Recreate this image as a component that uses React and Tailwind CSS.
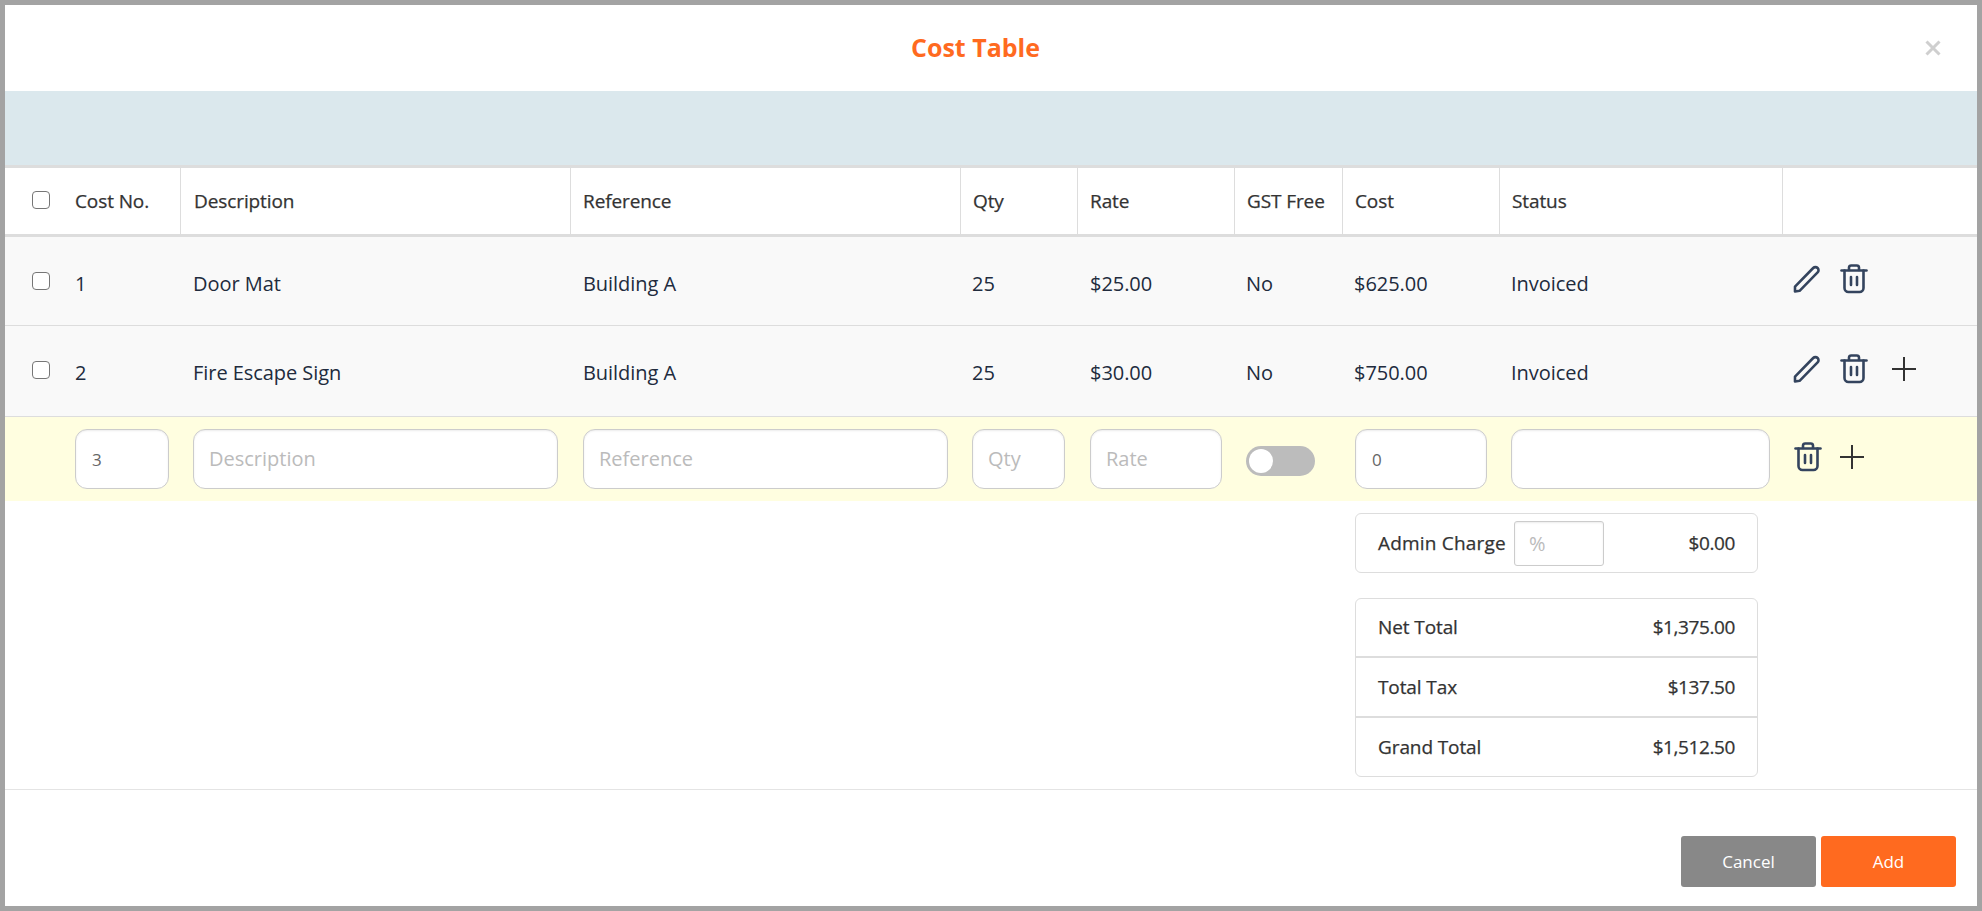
import React from "react";

const GRID = "grid grid-cols-[58px_118px_389px_390px_117px_157px_108px_157px_283px_195px]";
const FONT = "font-['Open_Sans',sans-serif]";

const ROWS = [
  { no: "1", description: "Door Mat", reference: "Building A", qty: "25", rate: "$25.00", gst: "No", cost: "$625.00", status: "Invoiced" },
  { no: "2", description: "Fire Escape Sign", reference: "Building A", qty: "25", rate: "$30.00", gst: "No", cost: "$750.00", status: "Invoiced", last: true },
];

const HEADS = ["Cost No.", "Description", "Reference", "Qty", "Rate", "GST Free", "Cost", "Status", ""];

function Pencil() {
  return (
    <svg width="28" height="28" viewBox="0 0 28 28" fill="none" stroke="#34445e" strokeWidth="2.6" strokeLinejoin="round" strokeLinecap="round">
      <path d="M2 26.5v-4.8L20.2 3a3.1 3.1 0 0 1 4.4 0a3.1 3.1 0 0 1 0 4.4L6.6 25.8L2 26.5Z" />
    </svg>
  );
}

function Trash() {
  return (
    <svg width="28" height="30" viewBox="0 0 28 30" fill="none" stroke="#34445e" strokeWidth="2.6" strokeLinejoin="round" strokeLinecap="round">
      <path d="M1.5 6.5h25" />
      <path d="M9 6V3.5A2.2 2.2 0 0 1 11.2 1.5h5.6A2.2 2.2 0 0 1 19 3.5V6" />
      <path d="M4.5 6.5V24a4 4 0 0 0 4 4h11a4 4 0 0 0 4-4V6.5" />
      <path d="M11 13v8M17 13v8" />
    </svg>
  );
}

function Plus() {
  return (
    <svg width="24" height="24" viewBox="0 0 24 24" fill="none" stroke="#333" strokeWidth="2">
      <path d="M12 0v24M0 12h24" />
    </svg>
  );
}

function Check() {
  return (
    <input
      type="checkbox"
      readOnly
      className="appearance-none block w-[18px] h-[18px] rounded-[4px] border-[1.5px] border-[#767676] bg-white"
    />
  );
}

function Field({ placeholder, value, small }) {
  return (
    <input
      readOnly
      placeholder={placeholder}
      value={value}
      className={`h-[60px] w-full rounded-[12px] border border-[#ccc] bg-white outline-none placeholder:text-[#bbb] shadow-[inset_0_1px_2px_rgba(0,0,0,0.08)] ${
        small ? "px-4 text-[17px] text-[#666]" : "px-[15px] pb-[2px] text-[20px]"
      }`}
    />
  );
}

function TotalRow({ label, value, className }) {
  return (
    <div className={`flex items-center justify-between px-[22px] text-[19px] font-medium tracking-[-0.1px] [-webkit-text-stroke:0.25px] text-[#333] ${className}`}>
      <span>{label}</span>
      <span className="tracking-[-0.4px]">{value}</span>
    </div>
  );
}

export default function App() {
  return (
    <div className={`h-screen bg-[#a3a3a3] p-[5px] ${FONT}`}>
      <div className="h-full bg-white flex flex-col">
        <div className="h-[86px] flex items-center pl-[24px] pr-[36px]">
          <h1 className="flex-1 text-center text-[25px] font-bold text-[#ff6a1f] pr-[3px]">Cost Table</h1>
          <svg width="16" height="16" viewBox="0 0 16 16" stroke="#cfcfcf" strokeWidth="3">
            <path d="M1.5 1.5l13 13M14.5 1.5l-13 13" />
          </svg>
        </div>

        <div className="h-[74px] bg-[#dbe8ed]" />

        <div className={`${GRID} border-y-[3px] border-[#ddd] h-[72px] text-[19px] font-medium tracking-[-0.1px] [-webkit-text-stroke:0.25px] text-[#333]`}>
          <div className="flex items-center pl-[27px] pb-[2px]">
            <Check />
          </div>
          {HEADS.map((h, i) => (
            <div
              key={i}
              className={`flex items-center px-3 ${i > 0 ? "border-l border-[#ddd]" : ""} ${i === 1 ? "-ml-px pl-[13px]" : ""}`}
            >
              {h}
            </div>
          ))}
        </div>

        {ROWS.map((r) => (
          <div
            key={r.no}
            className={`${GRID} items-center bg-[#f9f9f9] border-b border-[#ddd] text-[20px] tracking-[-0.05px] text-[#212b3d] ${r.last ? "h-[91px]" : "h-[89px]"}`}
          >
            <div className={`pl-[27px] ${r.last ? "pb-[2px]" : ""}`}>
              <Check />
            </div>
            <div className={`px-3 ${r.last ? "pt-[3px]" : "pt-[5px]"}`}>{r.no}</div>
            <div className={`px-3 ${r.last ? "pt-[3px]" : "pt-[5px]"}`}>{r.description}</div>
            <div className={`pl-[13px] pr-3 ${r.last ? "pt-[3px]" : "pt-[5px]"}`}>{r.reference}</div>
            <div className={`px-3 ${r.last ? "pt-[3px]" : "pt-[5px]"}`}>{r.qty}</div>
            <div className={`pl-[13px] pr-3 ${r.last ? "pt-[3px]" : "pt-[5px]"}`}>{r.rate}</div>
            <div className={`px-3 ${r.last ? "pt-[3px]" : "pt-[5px]"}`}>{r.gst}</div>
            <div className={`px-3 ${r.last ? "pt-[3px]" : "pt-[5px]"}`}>{r.cost}</div>
            <div className={`px-3 ${r.last ? "pt-[3px]" : "pt-[5px]"}`}>{r.status}</div>
            <div className="flex items-center gap-[19px] pl-[11px] pb-[4px]">
              <Pencil />
              <Trash />
              {r.last && <span className="ml-[5px]"><Plus /></span>}
            </div>
          </div>
        ))}

        <div className={`${GRID} items-center h-[84px] bg-[#fffee0]`}>
          <div />
          <div className="px-3"><Field value="3" small /></div>
          <div className="px-3"><Field placeholder="Description" /></div>
          <div className="pl-[13px] pr-3"><Field placeholder="Reference" /></div>
          <div className="px-3"><Field placeholder="Qty" /></div>
          <div className="pl-[13px] pr-3"><Field placeholder="Rate" /></div>
          <div className="px-3 pt-[4px]">
            <div className="w-[69px] h-[30px] rounded-full bg-[#bcbcbc] p-[3px]">
              <div className="w-[24px] h-[24px] rounded-full bg-white" />
            </div>
          </div>
          <div className="pl-[13px] pr-3"><Field value="0" small /></div>
          <div className="px-3"><Field /></div>
          <div className="flex items-center gap-[18px] pl-[12px] pb-[4px]">
            <Trash />
            <Plus />
          </div>
        </div>

        <div className="flex-1 flex flex-col items-end pr-[219px] pt-[12px]">
          <div className="w-[403px] h-[60px] rounded-[6px] border border-[#ddd] flex items-center pl-[22px] pr-[22px] text-[19px] font-medium [-webkit-text-stroke:0.25px] text-[#333]">
            <span className="w-[136px] whitespace-nowrap tracking-[0.2px]">Admin Charge</span>
            <input
              readOnly
              placeholder="%"
              className="w-[90px] h-[45px] rounded-[3px] border border-[#ccc] px-[14px] text-[20px] outline-none font-normal [-webkit-text-stroke:0] placeholder:text-[#bbb] shadow-[inset_0_1px_2px_rgba(0,0,0,0.08)]"
            />
            <span className="ml-auto tracking-[-0.4px]">$0.00</span>
          </div>
          <div className="w-[403px] mt-[25px] rounded-[6px] border border-[#ddd]">
            <TotalRow label="Net Total" value="$1,375.00" className="h-[59px] border-b-2 border-[#ddd]" />
            <TotalRow label="Total Tax" value="$137.50" className="h-[60px] border-b-2 border-[#ddd]" />
            <TotalRow label="Grand Total" value="$1,512.50" className="h-[58px]" />
          </div>
        </div>

        <div className="h-[117px] border-t border-[#e4e4e4] flex justify-end items-start gap-[5px] pt-[46px] pr-[21px]">
          <button className="w-[135px] h-[51px] rounded-[3px] bg-[#888] text-white text-[17px]">Cancel</button>
          <button className="w-[135px] h-[51px] rounded-[3px] bg-[#ff6a1f] text-white text-[17px]">Add</button>
        </div>
      </div>
    </div>
  );
}
